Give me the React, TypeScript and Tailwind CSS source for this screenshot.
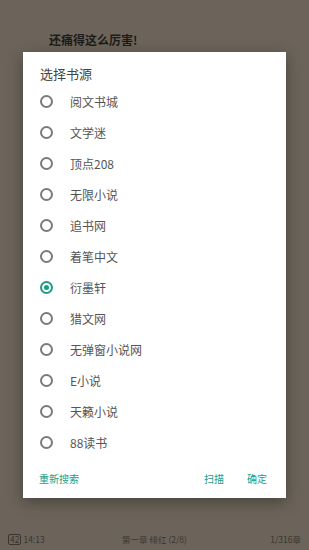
const sources = [
  "阅文书城",
  "文学迷",
  "顶点208",
  "无限小说",
  "追书网",
  "着笔中文",
  "衍墨轩",
  "猎文网",
  "无弹窗小说网",
  "E小说",
  "天籁小说",
  "88读书",
];

function Radio({ checked }: { checked: boolean }) {
  return (
    <span
      className={`flex h-[13px] w-[13px] items-center justify-center rounded-full border-2 ${
        checked ? "border-[#1b9c86]" : "border-[#7a7a7a]"
      }`}
    >
      {checked && <span className="h-[5px] w-[5px] rounded-full bg-[#1b9c86]" />}
    </span>
  );
}

export default function App() {
  const selected = "衍墨轩";
  return (
    <div
      className="flex h-[550px] w-[309px] flex-col bg-[#6c645a] overflow-hidden"
      style={{ fontFamily: '"Noto Sans CJK SC", "Noto Sans", sans-serif' }}
    >
      <div className="h-[52px] pl-[49px] pt-[31px] text-[12px] leading-[18px] font-bold text-[#1e1b18]">
        还痛得这么厉害!
      </div>

      <div className="mx-[23px] flex flex-col bg-white shadow-[0_4px_14px_rgba(0,0,0,0.35)]">
        <div className="pl-[17px] pt-[11px] text-[13px] leading-[22px] text-[#444]">
          选择书源
        </div>
        <ul className="flex flex-col pt-[1px]">
          {sources.map((s) => (
            <li key={s} className="flex h-[31px] items-center pl-[17px]">
              <Radio checked={s === selected} />
              <span className="ml-[17px] text-[12px] text-[#555]">{s}</span>
            </li>
          ))}
        </ul>
        <div className="flex h-[40px] items-center pl-[16px] pr-[19px] text-[10px] text-[#1b9c86]">
          <span>重新搜索</span>
          <span className="ml-auto">扫描</span>
          <span className="ml-[23px]">确定</span>
        </div>
      </div>

      <div className="mt-auto flex h-[22px] items-center px-[8px] text-[8.5px] text-[#3a352f]">
        <div className="flex flex-1 items-center gap-[2px]">
          <span className="rounded-[2px] border border-[#3a352f] px-[1px] leading-[9px]">42</span>
          <span>14:13</span>
        </div>
        <div className="flex-1 text-center whitespace-nowrap">第一章 绯红 (2/8)</div>
        <div className="flex-1 text-right">1/316章</div>
      </div>
    </div>
  );
}
